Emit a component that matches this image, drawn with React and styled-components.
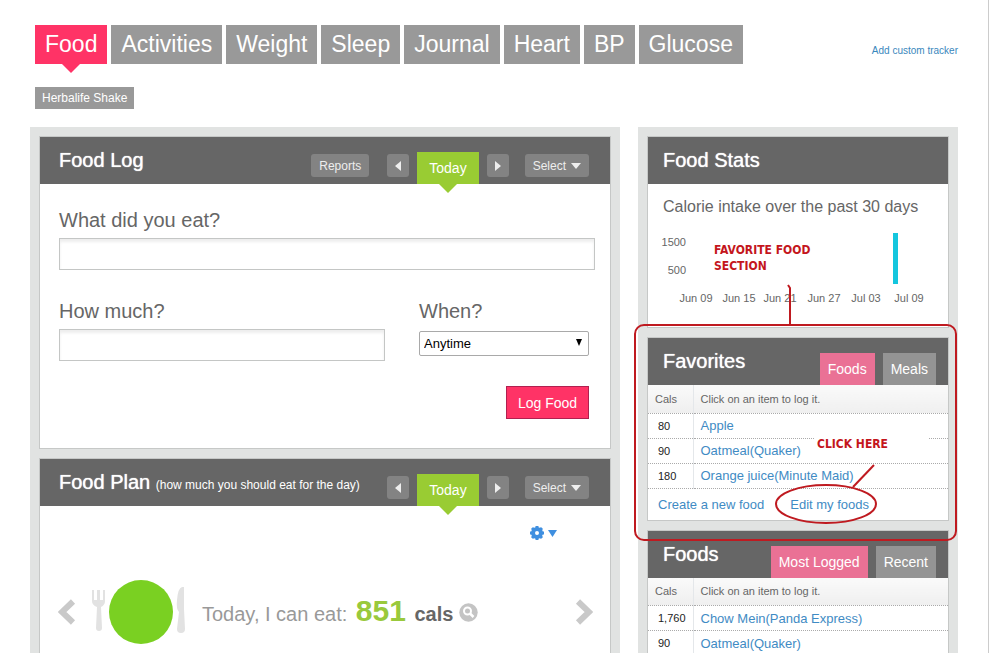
import React from 'react'
import styled, { createGlobalStyle, css } from 'styled-components'

const trackers = ['Food', 'Activities', 'Weight', 'Sleep', 'Journal', 'Heart', 'BP', 'Glucose']

const favorites = [
    { cals: '80', name: 'Apple' },
    { cals: '90', name: 'Oatmeal(Quaker)' },
    { cals: '180', name: 'Orange juice(Minute Maid)' },
]

const mostLogged = [
    { cals: '1,760', name: 'Chow Mein(Panda Express)' },
    { cals: '90', name: 'Oatmeal(Quaker)' },
]

const chartDays = [
    { x: 48, label: 'Jun 09' },
    { x: 91, label: 'Jun 15' },
    { x: 132, label: 'Jun 21' },
    { x: 176, label: 'Jun 27' },
    { x: 218, label: 'Jul 03' },
    { x: 261, label: 'Jul 09' },
]

function App() {
    return (
        <>
            <GlobalStyle />
            <Page>
                <TopBar>
                    <Nav>
                        {trackers.map((name) => (
                            <NavLink key={name} href="#" $active={name === 'Food'}>{name}</NavLink>
                        ))}
                    </Nav>
                    <TrackerLink href="#">Add custom tracker</TrackerLink>
                </TopBar>
                <SubNav>
                    <SubLink href="#">Herbalife Shake</SubLink>
                </SubNav>
                <Columns>
                    <MainColumn>
                        <FoodLog />
                        <FoodPlan />
                    </MainColumn>
                    <SideColumn>
                        <FoodStats />
                        <Panel>
                            <SideHeader title="Favorites" tabs={['Foods', 'Meals']} />
                            <FoodTable rows={favorites} />
                            <PanelFooter>
                                <FoodLink href="#">Create a new food</FoodLink>
                                <FoodLink href="#">Edit my foods</FoodLink>
                            </PanelFooter>
                            <Callouts />
                        </Panel>
                        <Panel $grow>
                            <SideHeader title="Foods" tabs={['Most Logged', 'Recent']} />
                            <FoodTable rows={mostLogged} />
                        </Panel>
                    </SideColumn>
                </Columns>
            </Page>
        </>
    )
}

export default App

function DateControls(props) {
    return (
        <Controls>
            {props.reports && <GreyButton>Reports</GreyButton>}
            <DayGroup>
                <ArrowButton aria-label="Previous day">
                    <svg width="6" height="10" viewBox="0 0 6 10"><path d="M6 0v10L0 5z" fill="#eee" /></svg>
                </ArrowButton>
                <TodayButton>Today</TodayButton>
                <ArrowButton aria-label="Next day">
                    <svg width="6" height="10" viewBox="0 0 6 10"><path d="M0 0v10l6-5z" fill="#eee" /></svg>
                </ArrowButton>
            </DayGroup>
            <GreyButton aria-haspopup="menu">
                Select
                <svg width="10" height="6" viewBox="0 0 10 6"><path d="M0 0h10L5 6z" fill="#eee" /></svg>
            </GreyButton>
        </Controls>
    )
}

function FoodLog() {
    return (
        <Panel>
            <PanelHeader>
                <Title>Food Log</Title>
                <DateControls reports />
            </PanelHeader>
            <LogForm onSubmit={(e) => e.preventDefault()}>
                <Field>
                    <Label htmlFor="what">What did you eat?</Label>
                    <TextInput id="what" type="text" />
                </Field>
                <FieldRow>
                    <Field>
                        <Label htmlFor="amount">How much?</Label>
                        <TextInput id="amount" type="text" />
                    </Field>
                    <WhenField>
                        <Label htmlFor="when">When?</Label>
                        <SelectWrap>
                            <WhenSelect id="when">
                                <option>Anytime</option>
                            </WhenSelect>
                            <svg width="6" height="7" viewBox="0 0 6 7"><path d="M0 0h6L3 7z" fill="#000" /></svg>
                        </SelectWrap>
                    </WhenField>
                </FieldRow>
                <LogButton type="submit">Log Food</LogButton>
            </LogForm>
        </Panel>
    )
}

function FoodPlan() {
    return (
        <Panel $grow>
            <PanelHeader>
                <Title>Food Plan <small>(how much you should eat for the day)</small></Title>
                <DateControls />
            </PanelHeader>
            <PlanBody>
                <GearButton aria-label="Plan settings">
                    <svg width="27" height="14" viewBox="0 0 27 14">
                        <circle cx="7" cy="7" r="4" fill="none" stroke="#3f8fe0" strokeWidth="4" />
                        <path d="M7 0v2M7 12v2M0 7h2M12 7h2M2 2l2 2M10 10l2 2M12 2l-2 2M4 10l-2 2" stroke="#3f8fe0" strokeWidth="3" />
                        <path d="M18 4h9l-4.500 7z" fill="#3f8fe0" />
                    </svg>
                </GearButton>
                <PlanRow>
                    <IconButton aria-label="Previous">
                        <svg width="18" height="26" viewBox="0 0 18 26">
                            <path d="M15 2.500L4 13l11 10.500" fill="none" stroke="#c9c9c9" strokeWidth="6" />
                        </svg>
                    </IconButton>
                    <Plate />
                    <PlanText>
                        Today, I can eat: <strong>851</strong> <b>cals</b>
                    </PlanText>
                    <IconButton aria-label="Details">
                        <svg width="19" height="19" viewBox="0 0 19 19">
                            <circle cx="9.500" cy="9.500" r="9.200" fill="#c4c4c4" />
                            <circle cx="8.500" cy="8" r="3.500" fill="none" stroke="#fff" strokeWidth="2" />
                            <path d="M11 10.500l3.500 3.500" stroke="#fff" strokeWidth="2.500" />
                        </svg>
                    </IconButton>
                    <IconButton aria-label="Next" $last>
                        <svg width="18" height="26" viewBox="0 0 18 26">
                            <path d="M3 2.500L14 13L3 23.500" fill="none" stroke="#c9c9c9" strokeWidth="6" />
                        </svg>
                    </IconButton>
                </PlanRow>
            </PlanBody>
        </Panel>
    )
}

// fork, plate and knife
function Plate() {
    return (
        <PlateIcon viewBox="0 0 96 64" aria-hidden="true">
            <path
                d="M1 10h2v10h3V10h3v10h3V10h2v11q0 4-4 6l1 21q0 3-3 3t-3-3l1-21q-5-2-5-6z"
                fill="#e2e2e2"
            />
            <circle cx="50" cy="32" r="32" fill="#7ad022" />
            <path d="M93 7v22l1 20q0 4-4 4t-4-4l2-17q-3-3-2-12q1-12 5-13z" fill="#e2e2e2" />
        </PlateIcon>
    )
}

function FoodStats() {
    return (
        <Panel>
            <PanelHeader $side>
                <Title>Food Stats</Title>
            </PanelHeader>
            <StatsBody>
                <StatsText>Calorie intake over the past 30 days</StatsText>
                <Chart role="img" aria-label="Calorie intake">
                    <text x="38" y="30" textAnchor="end">1500</text>
                    <text x="38" y="58" textAnchor="end">500</text>
                    {chartDays.map((day) => (
                        <text key={day.label} x={day.x} y="86" textAnchor="middle">{day.label}</text>
                    ))}
                    <rect x="245" y="17" width="5" height="51" fill="#14c6de" />
                </Chart>
            </StatsBody>
        </Panel>
    )
}

function SideHeader(props) {
    return (
        <PanelHeader $side>
            <Title>{props.title}</Title>
            <Tabs>
                {props.tabs.map((tab, i) => (
                    <Tab key={tab} $active={i === 0}>{tab}</Tab>
                ))}
            </Tabs>
        </PanelHeader>
    )
}

function FoodTable(props) {
    return (
        <Table>
            <thead>
                <tr>
                    <th>Cals</th>
                    <th>Click on an item to log it.</th>
                </tr>
            </thead>
            <tbody>
                {props.rows.map((row) => (
                    <tr key={row.name}>
                        <td>{row.cals}</td>
                        <td><FoodLink href="#">{row.name}</FoodLink></td>
                    </tr>
                ))}
            </tbody>
        </Table>
    )
}

// red help marks drawn over the favorites panel
function Callouts() {
    return (
        <CalloutLayer viewBox="0 0 340 310">
            <rect x="185" y="192" width="113" height="20" fill="#fff" />
            <g fill="none" stroke="#bf1a20" strokeWidth="2">
                <rect x="5" y="85" width="321" height="215" rx="9" />
                <path d="M158 45l2 3v37" />
                <ellipse cx="196" cy="264" rx="50" ry="19" />
                <path d="M244 225l-21 22" />
            </g>
            <text x="84" y="14">FAVORITE FOOD</text>
            <text x="84" y="30">SECTION</text>
            <text x="187" y="208">CLICK HERE</text>
        </CalloutLayer>
    )
}

const GlobalStyle = createGlobalStyle`
* {
    box-sizing: border-box;
}
html {
    scrollbar-width: none;
}
body {
    margin: 0;
    background: #fff;
    color: #666;
    font-family: "Liberation Sans", Arial, sans-serif;
    font-size: 13px;
}
button, input, select {
    font-family: inherit;
    margin: 0;
}
button {
    border: 0;
    padding: 0;
    cursor: pointer;
}
a {
    text-decoration: none;
}
`

const Page = styled.div`
min-height: 100vh;
margin-right: 2px;
padding: 25px 30px 0;
border-right: 1px solid #ccc;
`

const TopBar = styled.header`
display: flex;
align-items: center;
justify-content: space-between;
padding-left: 5px;
`

const Nav = styled.nav`
display: flex;
gap: 4px;
`

const arrowDown = css`
&::after {
    content: '';
    position: absolute;
    top: 100%;
    left: 50%;
    margin-left: -9px;
    border: 9px solid transparent;
    border-bottom: 0;
    border-top-color: ${(props) => props.$arrow || '#ff3366'};
}
`

const NavLink = styled.a`
position: relative;
height: 39px;
padding: 0 10px;
line-height: 38px;
font-size: 23px;
color: white;
background: ${(props) => (props.$active ? '#ff3366' : '#999')};
${(props) => props.$active && arrowDown}
`

const TrackerLink = styled.a`
padding-top: 12px;
font-size: 10px;
color: #3a87bd;
`

const SubNav = styled.div`
display: flex;
padding: 23px 5px 18px;
`

const SubLink = styled.a`
height: 22px;
padding: 0 7px;
line-height: 22px;
font-size: 12px;
color: white;
background: #999;
`

const Columns = styled.div`
display: flex;
gap: 18px;
`

const MainColumn = styled.main`
flex: 1;
min-width: 0;
display: flex;
flex-direction: column;
gap: 9px;
padding: 9px;
background: #e1e3e2;
`

const SideColumn = styled(MainColumn).attrs({ as: 'aside' })`
flex: 0 0 320px;
`

const Panel = styled.section`
position: relative;
flex-grow: ${(props) => (props.$grow ? 1 : 0)};
background: white;
border: 1px solid #c6c8c7;
`

const PanelHeader = styled.header`
display: flex;
justify-content: space-between;
height: 47px;
padding: ${(props) => (props.$side ? '0 12px 0 15px' : '0 21px 0 19px')};
background: #666;
`

const Title = styled.h2`
margin: 0;
font-size: 20px;
font-weight: normal;
line-height: 47px;
color: white;
text-shadow: 0 0 1px white;
white-space: nowrap;

small {
    font-size: 12px;
    text-shadow: none;
}
`

const Controls = styled.div`
display: flex;
align-items: flex-end;
gap: 16px;
`

const DayGroup = styled.div`
display: flex;
align-items: flex-end;
gap: 8px;
margin-left: 2px;
`

const GreyButton = styled.button`
display: flex;
align-items: center;
gap: 5px;
height: 23px;
margin-bottom: 7px;
padding: 0 8px;
font-size: 12px;
color: #eee;
background: #838383;
border-radius: 3px;
`

const ArrowButton = styled(GreyButton)`
justify-content: center;
width: 22px;
padding: 0;
`

const TodayButton = styled.button.attrs({ $arrow: '#99cc33' })`
position: relative;
height: 32px;
padding: 0 12px;
font-size: 14px;
color: white;
background: #99cc33;
${arrowDown}
`

const LogForm = styled.form`
padding: 24px 15px 29px 19px;
`

const Field = styled.div`
flex: 1;
display: flex;
flex-direction: column;
gap: 6px;
`

const FieldRow = styled.div`
display: flex;
gap: 34px;
padding: 29px 6px 25px 0;
`

const WhenField = styled(Field)`
flex: 0 0 170px;
gap: 8px;
`

const Label = styled.label`
font-size: 20px;
line-height: 24px;
`

const TextInput = styled.input`
width: 100%;
height: 32px;
padding: 0 8px;
font-size: 14px;
border: 1px solid #c4c6c5;
background: white;
box-shadow: inset 0 3px 3px #eee;
`

const SelectWrap = styled.div`
position: relative;

svg {
    position: absolute;
    top: 8px;
    right: 7px;
    pointer-events: none;
}
`

const WhenSelect = styled.select`
display: block;
appearance: none;
width: 100%;
height: 25px;
padding: 0 4px;
font-size: 13px;
color: black;
background: white;
border: 1px solid #a9a9a9;
border-radius: 2px;
`

const LogButton = styled.button`
display: block;
width: 83px;
height: 33px;
margin: 0 6px 0 auto;
font-size: 14px;
color: white;
background: #ff3366;
border: 1px solid #b02050;
`

const PlanBody = styled.div`
padding: 20px 17px 60px 18px;
`

const GearButton = styled.button`
display: block;
margin: 0 36px 40px auto;
background: none;

svg {
    display: block;
}
`

const PlanRow = styled.div`
display: flex;
align-items: center;
`

const IconButton = styled.button`
margin-left: ${(props) => (props.$last ? 'auto' : '0')};
background: none;

svg {
    display: block;
}
`

const PlateIcon = styled.svg`
width: 96px;
height: 64px;
margin: 0 15px;
`

const PlanText = styled.p`
margin: 0 6px 0 0;
font-size: 20px;
line-height: 30px;
color: #999;
white-space: nowrap;

strong {
    margin: 0 3px;
    font-size: 30px;
    color: #99c93c;
}
b {
    color: #666;
}
`

const StatsBody = styled.div`
padding: 13px 0 15px;
`

const StatsText = styled.p`
margin: 0 15px;
font-size: 16px;
line-height: 19px;
`

const Chart = styled.svg`
display: block;
width: 100%;
height: 96px;
font-size: 11px;
fill: #666;
`

const Tabs = styled.div`
display: flex;
align-items: flex-end;
gap: 8px;
`

const Tab = styled.button`
height: 32px;
padding: 0 8px;
font-size: 14px;
color: white;
background: ${(props) => (props.$active ? '#ea7195' : '#949494')};
`

const Table = styled.table`
width: 100%;
border-collapse: collapse;
table-layout: fixed;

th, td {
    height: 25px;
    padding: 0 7px;
    text-align: left;
    border-bottom: 1px dotted #aaa;
}
th {
    height: 28px;
    font-size: 11px;
    font-weight: normal;
    background: linear-gradient(#fafafa, #efefef);
}
th:first-child, td:first-child {
    width: 45px;
    border-right: 1px solid #e4e7ea;
}
td:first-child {
    padding: 0 0 0 10px;
    font-size: 11px;
    color: #222;
}
`

const FoodLink = styled.a`
font-size: 13px;
color: #3f8bc4;
`

const PanelFooter = styled.footer`
display: flex;
gap: 26px;
padding: 0 10px;
line-height: 31px;
`

const CalloutLayer = styled.svg`
position: absolute;
top: -98px;
left: -18px;
z-index: 1;
width: 340px;
height: 310px;
pointer-events: none;

text {
    font-family: "DejaVu Sans Condensed", "DejaVu Sans", sans-serif;
    font-size: 12px;
    font-weight: bold;
    fill: #c4161c;
}
`
